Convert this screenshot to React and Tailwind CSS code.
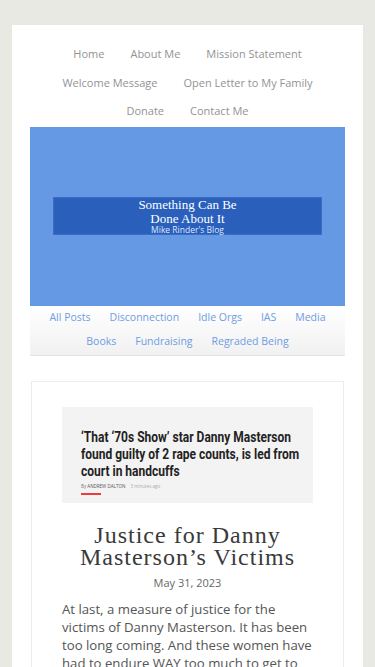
const mainNav = [
  ['Home', 'About Me', 'Mission Statement'],
  ['Welcome Message', 'Open Letter to My Family'],
  ['Donate', 'Contact Me'],
];

const catNav = [
  ['All Posts', 'Disconnection', 'Idle Orgs', 'IAS', 'Media'],
  ['Books', 'Fundraising', 'Regraded Being'],
];

const sans = { fontFamily: '"Open Sans", "Noto Sans", sans-serif' };
const serif = { fontFamily: '"Liberation Serif", "DejaVu Serif", serif' };

export default function App() {
  return (
    <div className="min-h-[667px] bg-[#e9e9e4] px-3 pt-[25px]" style={sans}>
      <div className="bg-white px-[18px] pt-[15px] pb-10">

        {/* ── Top nav ── */}
        <nav className="flex flex-col items-center">
          {mainNav.map((row, i) => (
            <div key={i} className="flex h-[28.5px] items-center justify-center gap-[26px]">
              {row.map((item) => (
                <a key={item} className="text-[11px] text-[#939393]">{item}</a>
              ))}
            </div>
          ))}
        </nav>

        {/* ── Header banner ── */}
        <div className="mt-[1px] flex h-[179px] items-center justify-center bg-[#6699e3]">
          <div className="flex w-[269px] flex-col items-center border border-[#3a6cc6] bg-[#2a5fbc] text-white">
            <span className="text-[13px] leading-[13.5px]" style={serif}>Something Can Be</span>
            <span className="text-[13px] leading-[13.5px]" style={serif}>Done About It</span>
            <span className="text-[8.5px] leading-[9px] text-[#dfe8f8]">Mike Rinder's Blog</span>
          </div>
        </div>

        {/* ── Category nav ── */}
        <nav className="flex flex-col items-center bg-gradient-to-b from-white to-[#f1f1f1] pb-[1px]">
          {catNav.map((row, i) => (
            <div key={i} className="flex h-[24px] items-center justify-center gap-[19px]">
              {row.map((item) => (
                <a key={item} className="text-[10.5px] text-[#6e9de3]">{item}</a>
              ))}
            </div>
          ))}
        </nav>
        <div className="h-[1px] bg-[#e3e3e3]" />

        {/* ── Post card ── */}
        <article className="mx-[1px] mt-[25px] border border-[#ececec] px-[30px] pt-[25px]">
          <div className="flex h-[96px] flex-col justify-center overflow-hidden bg-[#f3f3f3] pl-[19px] pt-[14px]">
            <h3
              className="w-[280px] origin-left scale-x-[0.8] text-[15px] font-bold leading-[17px] text-[#222]"
              style={{ fontFamily: 'Roboto, "Liberation Sans", sans-serif' }}
            >
              ‘That ‘70s Show’ star Danny Masterson found guilty of 2 rape counts, is led from court in handcuffs
            </h3>
            <p className="mt-[3px] text-[4.5px] leading-[6px] text-[#777]">
              By <span className="text-[#555]">ANDREW DALTON</span> <span className="ml-1 text-[#aaa]">3 minutes ago</span>
            </p>
            <div className="mt-[4px] h-[2px] w-[20px] bg-[#ef3b3b]" />
          </div>

          <h1
            className="mt-[21px] text-center text-[24px] leading-[22.5px] tracking-[1px] text-[#3a3a3a]"
            style={serif}
          >
            Justice for Danny Masterson’s Victims
          </h1>
          <p className="mt-[6px] text-center text-[11px] text-[#666]">May 31, 2023</p>
          <p className="mt-[9px] text-[13.2px] leading-[18px] text-[#555]">
            At last, a measure of justice for the victims of Danny Masterson. It has been too long coming. And these women have had to endure WAY too much to get to this point.
          </p>
        </article>
      </div>
    </div>
  );
}
